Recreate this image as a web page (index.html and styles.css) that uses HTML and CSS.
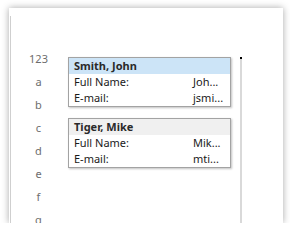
FILE: index.html
```html
<!DOCTYPE html>
<html>
<head>
<meta charset="utf-8">
<link rel="stylesheet" href="styles.css">
</head>
<body>
<div class="window">
  <div class="rail"></div>
  <div class="index">
    <div>123</div>
    <div>a</div>
    <div>b</div>
    <div>c</div>
    <div>d</div>
    <div>e</div>
    <div>f</div>
    <div>g</div>
  </div>
  <div class="cards">
    <div class="card">
      <div class="card-head selected">Smith, John</div>
      <div class="row"><span class="label">Full Name:</span><span class="value">Joh...</span></div>
      <div class="row"><span class="label">E-mail:</span><span class="value">jsmi...</span></div>
    </div>
    <div class="card">
      <div class="card-head">Tiger, Mike</div>
      <div class="row"><span class="label">Full Name:</span><span class="value">Mik...</span></div>
      <div class="row"><span class="label">E-mail:</span><span class="value">mti...</span></div>
    </div>
  </div>
  <div class="scroll"></div>
</div>
</body>
</html>
```

FILE: styles.css
```css
html, body {
  margin: 0;
  background: #ffffff;
}
body {
  padding: 8px 0 0 9px;
  font-family: "Noto Sans", "Open Sans", sans-serif;
}
.window {
  width: 274px;
  height: 215px;
  background: #ffffff;
  box-shadow: 0 0 7px rgba(0, 0, 0, 0.35);
  display: flex;
  overflow: hidden;
}
.rail {
  width: 1px;
  margin: 8px 0 0 1px;
  background: #cfcfcf;
}
.index {
  width: 55px;
  padding-top: 39px;
  text-align: center;
  font-size: 11px;
  line-height: 23px;
  color: #6d6d6d;
}
.cards {
  width: 163px;
  margin-left: 2px;
  padding-top: 49px;
  display: flex;
  flex-direction: column;
  gap: 11px;
}
.card {
  border: 1px solid #a3a3a3;
  box-shadow: 1px 1px 2px rgba(0, 0, 0, 0.25);
  background: #ffffff;
  font-size: 11px;
  color: #1a1a1a;
}
.card-head {
  height: 16px;
  line-height: 16px;
  padding-left: 5px;
  font-weight: bold;
  background: #f0f0f0;
  color: #2a2a2a;
}
.card-head.selected {
  background: #cce4f7;
}
.row {
  height: 16px;
  line-height: 16px;
  padding-left: 5px;
  display: flex;
}
.label {
  width: 119px;
}
.value {
  white-space: nowrap;
}
.scroll {
  width: 2px;
  margin: 49px 0 0 9px;
  background: #d9d9d9;
  border-top: 2px solid #000000;
}
```
